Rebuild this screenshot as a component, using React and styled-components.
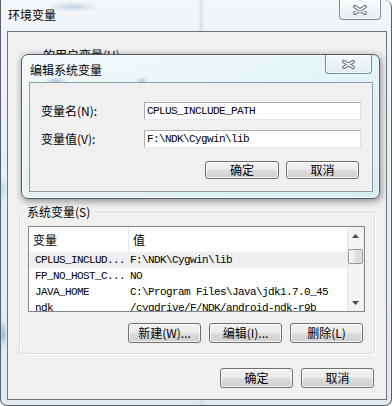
import React from 'react';
import styled, { createGlobalStyle } from 'styled-components';

const CJK = `"Noto Sans CJK SC", "Noto Sans", sans-serif`;
const MONO = `"Liberation Mono", "Noto Sans CJK SC", monospace`;

const Global = createGlobalStyle`
  html, body { margin: 0; padding: 0; background: #ffffff; overflow: hidden; }
  body { font-family: ${CJK}; font-size: 12px; color: #000; }
`;

const Window = styled.div`
  position: relative;
  box-sizing: border-box;
  width: 392px;
  height: 406px;
  display: flex;
  flex-direction: column;
  border: 1px solid #55606b;
  border-top: none;
  border-radius: 0 7px 7px 7px;
  overflow: hidden;
  background:
    radial-gradient(ellipse 26px 5px at 72px 7px, rgba(140, 175, 205, 0.5), transparent),
    radial-gradient(ellipse 4px 14px at 2px 334px, rgba(110, 160, 210, 0.7), transparent),
    radial-gradient(ellipse 4px 14px at 2px 190px, rgba(150, 215, 230, 0.6), transparent),
    linear-gradient(90deg, transparent 197px, rgba(185, 200, 212, 0.45) 200px, transparent 204px),
    linear-gradient(180deg, #f3f6f8 0%, #e9eef1 40%, #e2e9ed 100%);
`;

const TitleBar = styled.div`
  height: 31px;
  flex: none;
  display: flex;
  justify-content: space-between;
  align-items: flex-start;
`;

const Title = styled.div`
  padding: 8px 0 0 7px;
  font-size: 12px;
  line-height: 14px;
  color: #000;
`;

const CloseButton = styled.div`
  box-sizing: border-box;
  width: ${p => p.$w}px;
  height: ${p => p.$h}px;
  margin-right: ${p => p.$mr}px;
  display: flex;
  align-items: center;
  justify-content: center;
  border: 1px solid #7d8996;
  border-top: none;
  border-radius: 0 0 4px 4px;
  background: linear-gradient(180deg, rgba(250, 252, 253, 0.7), rgba(225, 234, 239, 0.7));
  box-shadow: inset 0 0 0 1px rgba(255, 255, 255, 0.6);
`;

const Client = styled.div`
  flex: 1;
  margin: 0 4px 5px 6px;
  border: 1px solid #747474;
  background: #f0f0f0;
  padding: 0 11px;
  display: flex;
  flex-direction: column;
`;

const GroupBox = styled.fieldset`
  box-sizing: border-box;
  margin: ${p => p.$mt}px 0 0;
  padding: 7px 9px 10px 8px;
  min-width: 0;
  height: ${p => (p.$h ? `${p.$h}px` : 'auto')};
  border: 1px solid ${p => (p.$covered ? 'transparent' : '#d5dfe5')};
  border-radius: 3px;
  box-shadow: ${p => (p.$covered ? 'none' : 'inset 1px 1px 0 #fff, 1px 1px 0 #fff')};
`;

const Legend = styled.legend`
  margin-left: ${p => p.$ml}px;
  padding: 0 2px;
  font-size: 12px;
  line-height: 14px;
  color: #000;
`;

const ListView = styled.div`
  box-sizing: border-box;
  height: 86px;
  border: 1px solid #828790;
  background: #fff;
  display: flex;
  overflow: hidden;
`;

const Columns = styled.div`
  flex: 1;
  min-width: 0;
  display: flex;
  flex-direction: column;
`;

const Header = styled.div`
  flex: none;
  height: 25px;
  display: grid;
  grid-template-columns: 100px 1fr;
`;

const HeaderCell = styled.div`
  display: flex;
  align-items: center;
  padding-left: 4px;
  border-right: ${p => (p.$divider ? '1px solid #e3e6ea' : 'none')};
  font-size: 12px;
  line-height: 14px;
`;

const Row = styled.div`
  flex: none;
  height: 16px;
  display: grid;
  grid-template-columns: 100px 1fr;
  align-items: center;
  background: ${p => (p.$selected ? '#efefef' : 'transparent')};
  font-family: ${MONO};
  font-size: 11px;
  letter-spacing: -0.6px;
  line-height: 16px;
  white-space: nowrap;
`;

const Cell = styled.div`
  padding-left: ${p => p.$pl}px;
  overflow: hidden;
`;

const ScrollBar = styled.div`
  width: 17px;
  flex: none;
  display: flex;
  flex-direction: column;
  align-items: center;
  background: linear-gradient(90deg, #e4e4e4 0, #f3f3f3 2px, #f3f3f3 15px, #e8e8e8 17px);
`;

const ArrowBox = styled.div`
  width: 17px;
  height: 17px;
  flex: none;
  display: flex;
  align-items: center;
  justify-content: center;
`;

const Thumb = styled.div`
  box-sizing: border-box;
  width: 15px;
  height: 15px;
  margin-top: 5px;
  flex: none;
  border: 1px solid #979797;
  border-radius: 2px;
  background: linear-gradient(90deg, #f7f7f7, #ececec 45%, #dcdcdc 55%, #dedede);
`;

const Spacer = styled.div`
  flex: 1;
`;

const ButtonRow = styled.div`
  display: flex;
  justify-content: flex-end;
  gap: ${p => p.$gap}px;
  margin-top: ${p => p.$mt}px;
  margin-right: ${p => p.$mr}px;
`;

const Button = styled.button`
  box-sizing: border-box;
  width: ${p => p.$w || 73}px;
  height: ${p => p.$h || 20}px;
  padding: 0;
  border: 1px solid #707070;
  border-radius: 3px;
  background: linear-gradient(180deg, #f2f2f2 0%, #ebebeb 48%, #dddddd 52%, #cfcfcf 100%);
  box-shadow: inset 0 0 0 1px rgba(255, 255, 255, 0.75);
  font-family: ${CJK};
  font-size: 12px;
  line-height: 14px;
  color: #000;
`;

const Dialog = styled.div`
  position: absolute;
  left: 20px;
  top: 54px;
  box-sizing: border-box;
  width: 359px;
  height: 145px;
  display: flex;
  flex-direction: column;
  border: 1px solid #515d68;
  border-radius: 7px;
  background:
    radial-gradient(ellipse 12px 4px at 34px 26px, rgba(120, 165, 205, 0.55), transparent),
    radial-gradient(ellipse 6px 4px at 120px 26px, rgba(120, 165, 205, 0.5), transparent),
    linear-gradient(90deg, rgba(255, 255, 255, 0.35), rgba(215, 240, 244, 0.4)),
    linear-gradient(180deg, #eef6f8 0%, #e2f0f3 50%, #dbecef 100%);
  box-shadow: inset 0 0 0 1px rgba(255, 255, 255, 0.65), 1px 2px 6px 1px rgba(0, 0, 0, 0.35);
`;

const DialogTitleBar = styled.div`
  height: 27px;
  flex: none;
  display: flex;
  justify-content: space-between;
  align-items: flex-start;
`;

const DialogTitle = styled.div`
  padding: 8px 0 0 8px;
  font-size: 12px;
  line-height: 14px;
`;

const DialogClient = styled.div`
  flex: 1;
  margin: 0 6px 6px 7px;
  border: 1px solid #8e9aa5;
  background: #f0f0f0;
  padding: 19px 11px 0;
  display: flex;
  flex-direction: column;
`;

const Form = styled.div`
  display: grid;
  grid-template-columns: 103px 1fr;
  row-gap: 10px;
  align-items: center;
`;

const Label = styled.div`
  font-size: 12px;
  line-height: 14px;
  white-space: nowrap;
`;

const Input = styled.div`
  box-sizing: border-box;
  height: 18px;
  padding: 0 2px;
  display: flex;
  align-items: center;
  background: #fff;
  border: 1px solid #abadb3;
  border-right-color: #dbdfe6;
  border-bottom-color: #e3e9ef;
  font-family: ${MONO};
  font-size: 11px;
  letter-spacing: -0.6px;
  white-space: nowrap;
`;

const CloseX = ({ w, h }) => (
  <svg width={w} height={h} viewBox={`0 0 ${w} ${h}`}>
    <path
      d={`M2 1.8 L${w - 2} ${h - 1.8} M${w - 2} 1.8 L2 ${h - 1.8}`}
      stroke="#5b6671"
      strokeWidth="3.6"
      strokeLinecap="round"
      fill="none"
    />
    <path
      d={`M2 1.8 L${w - 2} ${h - 1.8} M${w - 2} 1.8 L2 ${h - 1.8}`}
      stroke="#eef1f3"
      strokeWidth="1.7"
      strokeLinecap="round"
      fill="none"
    />
  </svg>
);

const Arrow = ({ up }) => (
  <svg width="7" height="4" viewBox="0 0 7 4">
    <path d={up ? 'M0 4 L3.5 0 L7 4 Z' : 'M0 0 L3.5 4 L7 0 Z'} fill="#4a4a4a" />
  </svg>
);

const rows = [
  ['CPLUS_INCLUD...', 'F:\\NDK\\Cygwin\\lib', true],
  ['FP_NO_HOST_C...', 'NO', false],
  ['JAVA_HOME', 'C:\\Program Files\\Java\\jdk1.7.0_45', false],
  ['ndk', '/cygdrive/F/NDK/android-ndk-r9b', false],
];

export default function App() {
  return (
    <>
      <Global />
      <Window>
        <TitleBar>
          <Title>环境变量</Title>
          <CloseButton $w={42} $h={20} $mr={10}>
            <CloseX w={14} h={10} />
          </CloseButton>
        </TitleBar>
        <Client>
          <GroupBox $mt={16} $h={150} $covered>
            <Legend $ml={13}>的用户变量(U)</Legend>
          </GroupBox>
          <GroupBox $mt={7}>
            <Legend $ml={-3}>系统变量(S)</Legend>
            <ListView>
              <Columns>
                <Header>
                  <HeaderCell $divider>变量</HeaderCell>
                  <HeaderCell>值</HeaderCell>
                </Header>
                {rows.map(([name, value, sel]) => (
                  <Row key={name} $selected={sel}>
                    <Cell $pl={6}>{name}</Cell>
                    <Cell $pl={1}>{value}</Cell>
                  </Row>
                ))}
              </Columns>
              <ScrollBar>
                <ArrowBox>
                  <Arrow up />
                </ArrowBox>
                <Thumb />
                <Spacer />
                <ArrowBox>
                  <Arrow />
                </ArrowBox>
              </ScrollBar>
            </ListView>
            <ButtonRow $gap={8} $mt={11} $mr={2}>
              <Button>新建(W)...</Button>
              <Button>编辑(I)...</Button>
              <Button>删除(L)</Button>
            </ButtonRow>
          </GroupBox>
          <ButtonRow $gap={8} $mt={14} $mr={1}>
            <Button $w={73}>确定</Button>
            <Button $w={73}>取消</Button>
          </ButtonRow>
        </Client>
        <Dialog>
          <DialogTitleBar>
            <DialogTitle>编辑系统变量</DialogTitle>
            <CloseButton $w={47} $h={19} $mr={7}>
              <CloseX w={13} h={9} />
            </CloseButton>
          </DialogTitleBar>
          <DialogClient>
            <Form>
              <Label>变量名(N):</Label>
              <Input>CPLUS_INCLUDE_PATH</Input>
              <Label>变量值(V):</Label>
              <Input>F:\NDK\Cygwin\lib</Input>
            </Form>
            <ButtonRow $gap={7} $mt={13} $mr={2}>
              <Button $w={74} $h={18}>确定</Button>
              <Button $w={73} $h={18}>取消</Button>
            </ButtonRow>
          </DialogClient>
        </Dialog>
      </Window>
    </>
  );
}
